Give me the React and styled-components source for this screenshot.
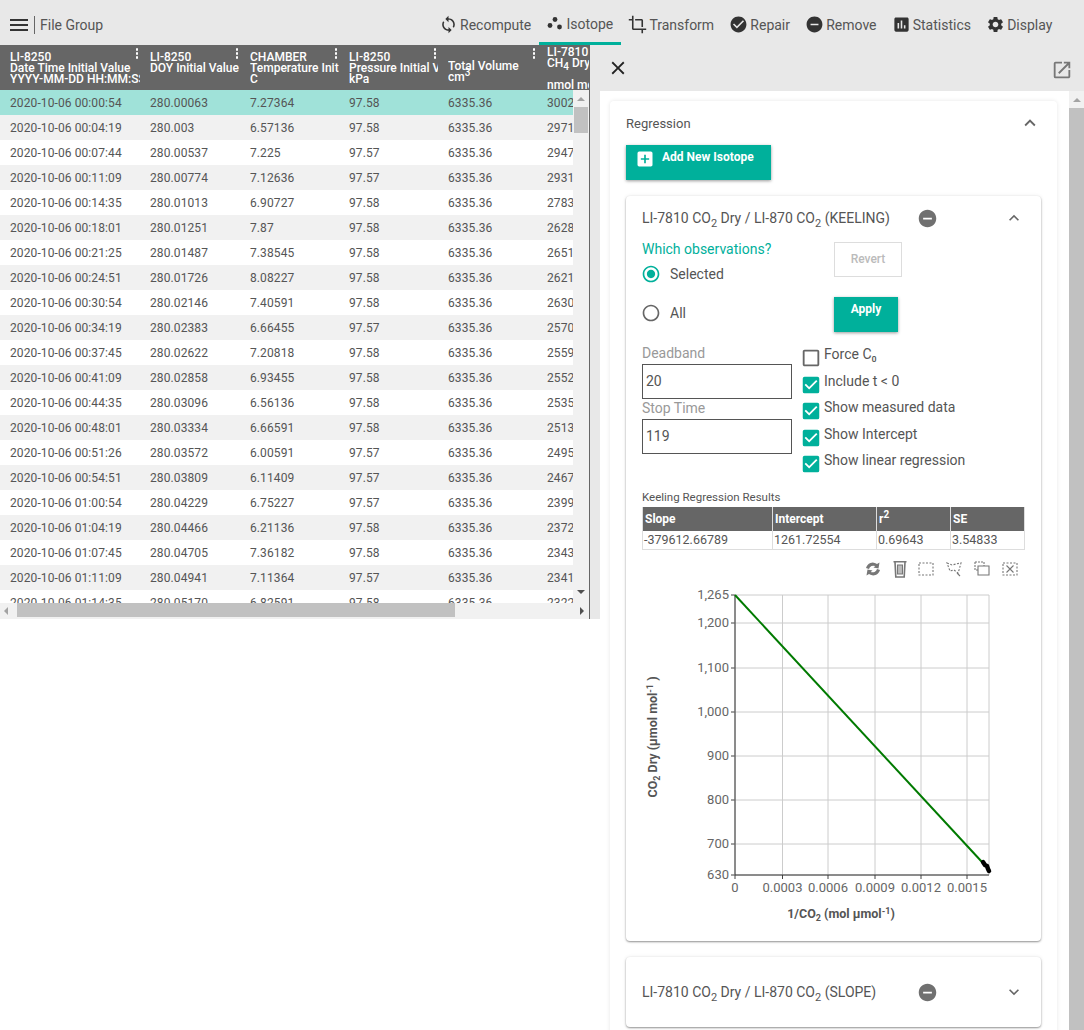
import styled, { createGlobalStyle } from "styled-components";
import {
  MdMenu,
  MdSync,
  MdCrop,
  MdCheckCircle,
  MdRemoveCircle,
  MdAssessment,
  MdSettings,
  MdClose,
  MdOpenInNew,
  MdExpandLess,
  MdExpandMore,
  MdAddBox,
  MdCheckBox,
  MdCheckBoxOutlineBlank,
  MdRadioButtonChecked,
  MdRadioButtonUnchecked,
} from "react-icons/md";

const TEAL = "#00b09b";

const columns = [
  { width: 140 },
  { width: 100 },
  { width: 99 },
  { width: 99 },
  { width: 99 },
  { width: 60 },
];

const rows = [
  ["2020-10-06 00:00:54", "280.00063", "7.27364", "97.58", "6335.36", "3002.1"],
  ["2020-10-06 00:04:19", "280.003", "6.57136", "97.58", "6335.36", "2971.4"],
  ["2020-10-06 00:07:44", "280.00537", "7.225", "97.57", "6335.36", "2947.2"],
  ["2020-10-06 00:11:09", "280.00774", "7.12636", "97.57", "6335.36", "2931.8"],
  ["2020-10-06 00:14:35", "280.01013", "6.90727", "97.58", "6335.36", "2783.5"],
  ["2020-10-06 00:18:01", "280.01251", "7.87", "97.58", "6335.36", "2628.3"],
  ["2020-10-06 00:21:25", "280.01487", "7.38545", "97.58", "6335.36", "2651.7"],
  ["2020-10-06 00:24:51", "280.01726", "8.08227", "97.58", "6335.36", "2621.9"],
  ["2020-10-06 00:30:54", "280.02146", "7.40591", "97.58", "6335.36", "2630.2"],
  ["2020-10-06 00:34:19", "280.02383", "6.66455", "97.57", "6335.36", "2570.6"],
  ["2020-10-06 00:37:45", "280.02622", "7.20818", "97.58", "6335.36", "2559.1"],
  ["2020-10-06 00:41:09", "280.02858", "6.93455", "97.58", "6335.36", "2552.4"],
  ["2020-10-06 00:44:35", "280.03096", "6.56136", "97.58", "6335.36", "2535.8"],
  ["2020-10-06 00:48:01", "280.03334", "6.66591", "97.58", "6335.36", "2513.3"],
  ["2020-10-06 00:51:26", "280.03572", "6.00591", "97.57", "6335.36", "2495.7"],
  ["2020-10-06 00:54:51", "280.03809", "6.11409", "97.57", "6335.36", "2467.2"],
  ["2020-10-06 01:00:54", "280.04229", "6.75227", "97.57", "6335.36", "2399.5"],
  ["2020-10-06 01:04:19", "280.04466", "6.21136", "97.58", "6335.36", "2372.1"],
  ["2020-10-06 01:07:45", "280.04705", "7.36182", "97.58", "6335.36", "2343.6"],
  ["2020-10-06 01:11:09", "280.04941", "7.11364", "97.57", "6335.36", "2341.9"],
  ["2020-10-06 01:14:35", "280.05170", "6.82591", "97.58", "6335.36", "2322.4"],
];

const checks = [
  { label: "Force C₀", on: false },
  { label: "Include t < 0", on: true },
  { label: "Show measured data", on: true },
  { label: "Show Intercept", on: true },
  { label: "Show linear regression", on: true },
];

const yTicks = [
  ["1,265", 15],
  ["1,200", 43],
  ["1,100", 88],
  ["1,000", 132],
  ["900", 176],
  ["800", 220],
  ["700", 264],
  ["630", 295],
];

const xTicks = [
  ["0", 93],
  ["0.0003", 140.5],
  ["0.0006", 186],
  ["0.0009", 233],
  ["0.0012", 279],
  ["0.0015", 325],
];

const GlobalStyle = createGlobalStyle`
  html, body {
    margin: 0;
    background: #fff;
  }
  #root {
    width: 1084px;
    height: 1030px;
    overflow: hidden;
    font-family: Roboto, "Liberation Sans", sans-serif;
    color: #555;
  }
  sub, sup {
    font-size: 75%;
    line-height: 0;
  }
`;

const Toolbar = styled.div`
  height: 45px;
  background: #e8e8e8;
  border-bottom: 1px solid #ccc;
  display: flex;
  align-items: stretch;
  padding: 0 24px 0 7px;
  margin-bottom: -1px;
  font-size: 14px;
`;
const GroupButton = styled.div`
  display: flex;
  align-items: center;
  flex: 1;
  padding-top: 5px;
  color: #555;
`;
const GroupName = styled.span`
  border-left: 1px solid #666;
  margin-left: 3px;
  padding-left: 5px;
  height: 18px;
  line-height: 18px;
`;
const ToolItem = styled.div`
  display: flex;
  align-items: center;
  gap: 2px;
  padding: ${(p) => (p.$active ? "5px" : "7px")} 7.6px 0;
  box-sizing: border-box;
  height: 45px;
  color: #555;
  border-bottom: 3px solid ${(p) => (p.$active ? TEAL : "transparent")};
  svg {
    color: #333;
    flex: none;
  }
`;

const Workspace = styled.div`
  display: flex;
  align-items: flex-start;
`;

const TablePane = styled.div`
  width: 590px;
  height: 574px;
  flex: none;
  box-sizing: border-box;
  border-right: 1px solid #666;
  display: flex;
  flex-direction: column;
  overflow: hidden;
`;
const HeaderRow = styled.div`
  display: flex;
  height: 45px;
  flex: none;
  background: #666;
  overflow: hidden;
`;
const HeaderCell = styled.div`
  position: relative;
  flex: none;
  width: ${(p) => p.$width}px;
  box-sizing: border-box;
  padding: 0 0 0 10px;
  display: flex;
  flex-direction: column;
  justify-content: center;
`;
const HeaderText = styled.div`
  color: #fff;
  font-size: 12px;
  font-weight: 500;
  line-height: 11px;
  white-space: nowrap;
  overflow: hidden;
  width: 100%;
  padding-top: ${(p) => p.$top || 2}px;
  sub {
    font-size: 10px;
  }
  sup {
    font-size: 10px;
  }
`;
const Kebab = styled.span`
  position: absolute;
  top: 3px;
  right: 2px;
  display: flex;
  flex-direction: column;
  gap: 1.5px;
  i {
    display: block;
    width: 2.5px;
    height: 2.5px;
    border-radius: 50%;
    background: #fff;
  }
`;
const TableBody = styled.div`
  display: flex;
  height: 513px;
  flex: none;
`;
const RowsClip = styled.div`
  width: 573px;
  flex: none;
  overflow: hidden;
`;
const Row = styled.div`
  display: flex;
  height: 25px;
  align-items: center;
  background: ${(p) => p.$bg};
`;
const Cell = styled.div`
  flex: none;
  width: ${(p) => p.$width}px;
  box-sizing: border-box;
  padding-left: 10px;
  font-size: 12px;
  letter-spacing: 0.1px;
  color: #555;
  white-space: nowrap;
`;

const VBar = styled.div`
  flex: 1;
  background: #f1f1f1;
  display: flex;
  flex-direction: column;
  align-items: center;
`;
const VThumb = styled.div`
  width: 100%;
  height: 26px;
  background: #c1c1c1;
  margin-top: ${(p) => p.$top}px;
  box-sizing: border-box;
  border: solid #f1f1f1;
  border-width: 0 1px;
`;
const Spacer = styled.div`
  flex: 1;
`;
const Arrow = styled.span`
  display: block;
  width: 0;
  height: 0;
  flex: none;
  border: 4px solid transparent;
  ${(p) =>
    p.$dir === "up" &&
    `border-top: 0; border-bottom: 4px solid ${p.$color}; margin-top: 7px;`}
  ${(p) =>
    p.$dir === "down" &&
    `border-bottom: 0; border-top: 4px solid ${p.$color}; margin-bottom: 9px;`}
  ${(p) =>
    p.$dir === "left" &&
    `border-left: 0; border-right: 4px solid ${p.$color}; margin-left: 4px;`}
  ${(p) =>
    p.$dir === "right" &&
    `border-right: 0; border-left: 4px solid ${p.$color}; margin-right: 5px;`}
`;
const HBar = styled.div`
  height: 16px;
  flex: none;
  background: #f1f1f1;
  display: flex;
  align-items: center;
`;
const HThumb = styled.div`
  width: 438px;
  height: 14px;
  margin-left: 9px;
  background: #c1c1c1;
  align-self: flex-start;
`;

const Drawer = styled.div`
  flex: 1;
  min-width: 0;
`;
const DrawerBar = styled.div`
  height: 46px;
  background: #e8e8e8;
  display: flex;
  align-items: center;
  justify-content: space-between;
  padding: 0 11px 0 17px;
  color: #222;
  svg:last-child {
    color: #777;
    margin-top: 4px;
  }
`;
const DrawerBody = styled.div`
  display: flex;
  height: 939px;
`;
const Gutter = styled.div`
  width: 10px;
  height: 528px;
  flex: none;
  background: #e8e8e8;
`;
const Panel = styled.div`
  flex: 1;
  min-width: 0;
  padding: 10px 12px 0 10px;
  overflow: hidden;
`;
const PanelBar = styled.div`
  width: 15px;
  flex: none;
  background: #f1f1f1;
  display: flex;
  flex-direction: column;
  align-items: center;
`;
const PanelThumb = styled.div`
  width: 100%;
  flex: 1;
  margin-top: 6px;
  background: #c1c1c1;
`;

const Card = styled.div`
  background: #fff;
  border-radius: 4px;
  box-shadow: 0 0 4px rgba(0, 0, 0, 0.1);
  padding: 0 16px 16px;
  min-height: 1000px;
`;
const CardHead = styled.div`
  display: flex;
  align-items: center;
  justify-content: space-between;
  height: 44px;
  font-size: 13px;
  color: #555;
  svg {
    color: #666;
  }
`;
const AddButton = styled.div`
  width: 145px;
  height: 35px;
  background: ${TEAL};
  color: #fff;
  box-shadow: 0 1px 3px rgba(0, 0, 0, 0.4);
  display: flex;
  align-items: flex-start;
  gap: 7px;
  padding: 4px 0 0 9px;
  box-sizing: border-box;
  font-size: 12px;
  font-weight: 700;
  line-height: 16px;
  svg {
    flex: none;
  }
`;
const IsotopeCard = styled.div`
  margin-top: 16px;
  background: #fff;
  border-radius: 4px;
  box-shadow: 0 1px 2px rgba(0, 0, 0, 0.4), 0 0 4px rgba(0, 0, 0, 0.08);
  padding: 0 16px ${(p) => p.$bottom || 0}px;
`;
const IsotopeHead = styled.div`
  display: flex;
  align-items: center;
  height: ${(p) => p.$height}px;
  font-size: 14px;
  color: #555;
  box-sizing: border-box;
  sub {
    font-size: 11px;
  }
`;
const IsotopeTitle = styled.span`
  width: 275px;
  white-space: nowrap;
  flex: none;
`;
const RemoveIcon = styled.span`
  display: flex;
  color: #707070;
  flex: 1;
`;
const Chevron = styled.span`
  display: flex;
  color: #666;
  margin-right: 1px;
`;

const OptionsRow = styled.div`
  display: flex;
  height: 93px;
`;
const ObservationCol = styled.div`
  width: 192px;
  flex: none;
`;
const ObservationTitle = styled.div`
  color: ${TEAL};
  font-size: 14px;
  line-height: 18px;
`;
const RadioRow = styled.div`
  display: flex;
  align-items: center;
  gap: 9px;
  height: 22px;
  margin-top: ${(p) => p.$top}px;
  margin-left: -1px;
  font-size: 14px;
  color: #555;
  svg {
    color: ${(p) => (p.$on ? TEAL : "#666")};
    flex: none;
  }
`;
const ActionCol = styled.div`
  display: flex;
  flex-direction: column;
  align-items: flex-start;
  gap: 20px;
  padding-top: 2px;
`;
const RevertButton = styled.div`
  width: 68px;
  height: 35px;
  box-sizing: border-box;
  border: 1px solid #ddd;
  color: #bbb;
  font-size: 12px;
  font-weight: 500;
  text-align: center;
  padding-top: 9px;
`;
const ApplyButton = styled.div`
  width: 64px;
  height: 35px;
  box-sizing: border-box;
  background: ${TEAL};
  color: #fff;
  font-size: 12px;
  font-weight: 700;
  text-align: center;
  padding-top: 5px;
  box-shadow: 0 1px 3px rgba(0, 0, 0, 0.4);
`;

const SettingsRow = styled.div`
  display: flex;
  margin-top: 11px;
  gap: 10px;
`;
const FieldCol = styled.div`
  width: 150px;
  flex: none;
`;
const FieldLabel = styled.div`
  color: #999;
  font-size: 14px;
  line-height: 16px;
  height: 19px;
  margin-top: 1px;
`;
const FieldBox = styled.div`
  height: 35px;
  box-sizing: border-box;
  border: 1px solid #555;
  padding: 0 3px;
  font-size: 14px;
  line-height: 33px;
  color: #555;
`;
const CheckCol = styled.div`
  display: flex;
  flex-direction: column;
  gap: 6.5px;
  padding-top: 3px;
`;
const CheckRow = styled.div`
  display: flex;
  align-items: flex-start;
  gap: 2px;
  height: 20px;
  font-size: 14px;
  line-height: 14px;
  color: #555;
  margin-left: -2px;
  svg {
    color: ${(p) => (p.$on ? TEAL : "#666")};
    flex: none;
  }
`;

const ResultsTitle = styled.div`
  margin-top: 17px;
  font-size: 11.5px;
  line-height: 14px;
  color: #555;
`;
const ResultsTable = styled.div`
  display: grid;
  grid-template-columns: 130px 104px 74px 74px;
  width: 383px;
  margin-top: 3px;
  border-bottom: 1px solid #ddd;
  border-left: 1px solid #ddd;
  box-sizing: border-box;
`;
const ResultsHead = styled.div`
  background: #666;
  color: #fff;
  font-size: 12px;
  font-weight: 700;
  height: 24px;
  line-height: 24px;
  padding-left: 2px;
  border-right: 1px solid #ddd;
  sup {
    font-size: 10px;
  }
`;
const ResultsCell = styled.div`
  font-size: 12.5px;
  height: 18px;
  line-height: 18px;
  padding-left: 1px;
  color: #555;
  border-right: 1px solid #ddd;
`;

const ChartTools = styled.div`
  display: flex;
  justify-content: flex-end;
  gap: 10px;
  height: 18px;
  margin-top: 10px;
  padding-right: 6px;
  color: #777;
  svg {
    overflow: visible;
  }
`;
const ChartSvg = styled.svg`
  display: block;
  margin-top: 2px;
  font-family: Roboto, "Liberation Sans", sans-serif;
`;

function IsotopeIcon() {
  return (
    <svg width="18" height="16" viewBox="0 0 18 16" fill="#333">
      <circle cx="9" cy="3.5" r="2.4" />
      <circle cx="4" cy="9.5" r="2.4" />
      <circle cx="13.500" cy="11" r="2.4" />
    </svg>
  );
}

function ToolIcon({ children }) {
  return (
    <svg
      width="18"
      height="18"
      viewBox="0 0 18 18"
      fill="none"
      stroke="#777"
      strokeWidth="1.1"
    >
      {children}
    </svg>
  );
}

function PlotTools() {
  return (
    <ChartTools>
      <ToolIcon>
        <g transform="translate(3 0)">
          <path
            d="M2 8a7 7 0 0 1 11-4l2.500-1.500-1 6-5-1 1.800-1.400A4.500 4.500 0 0 0 5 9zM16 10a7 7 0 0 1-11 4l-2.500 1.500 1-6 5 1-1.800 1.400A4.500 4.500 0 0 0 13 9z"
            fill="#777"
            stroke="none"
          />
        </g>
      </ToolIcon>
      <ToolIcon>
        <g transform="translate(2 0)">
          <path d="M2.500 1.800h13M4 2l.8 15h8.400L14 2" strokeWidth="1.6" />
          <path d="M6.500 5v9h5V5z" fill="#bbb" />
        </g>
      </ToolIcon>
      <ToolIcon>
        <path d="M2 3h14v12H2z" strokeDasharray="2 1.500" />
      </ToolIcon>
      <ToolIcon>
        <path d="M2 3l5 2 4-1 5-1-2 7-1 3-4-3-4 1z" strokeDasharray="2 1.500" />
        <path d="M12 13l3 3" />
      </ToolIcon>
      <ToolIcon>
        <path d="M2 2h9v4" strokeDasharray="2 1" />
        <path d="M2 2v8h3" strokeDasharray="2 1" />
        <path d="M5 6h11v9H5z" />
      </ToolIcon>
      <ToolIcon>
        <path d="M2 3h14v12H2z" strokeDasharray="2 1.500" />
        <path d="M5.500 5.500l7 7M12.500 5.500l-7 7" />
      </ToolIcon>
    </ChartTools>
  );
}

function HeaderMenu() {
  return (
    <Kebab>
      <i />
      <i />
      <i />
    </Kebab>
  );
}

function KeelingChart() {
  const plot = { left: 93, right: 347, top: 15, bottom: 295 };
  return (
    <ChartSvg width="383" height="350" viewBox="0 0 383 350">
      {yTicks.map(([label, y]) => (
        <g key={label}>
          <line x1={plot.left} x2={plot.right} y1={y} y2={y} stroke="#ccc" />
          <line x1={plot.left - 4} x2={plot.left} y1={y} y2={y} stroke="#444" />
          <text x={plot.left - 6} y={y + 4} fontSize="13" fill="#666" textAnchor="end">
            {label}
          </text>
        </g>
      ))}
      {xTicks.map(([label, x]) => (
        <g key={label}>
          <line x1={x} x2={x} y1={plot.top} y2={plot.bottom} stroke="#ccc" />
          <line x1={x} x2={x} y1={plot.bottom} y2={plot.bottom + 4} stroke="#444" />
          <text x={x} y={plot.bottom + 17} fontSize="13" fill="#666" textAnchor="middle">
            {label}
          </text>
        </g>
      ))}
      <line x1={plot.right} x2={plot.right} y1={plot.top} y2={plot.bottom} stroke="#ccc" />
      <line x1={plot.left} x2={plot.left} y1={plot.top} y2={plot.bottom} stroke="#333" />
      <line x1={plot.left} x2={plot.right} y1={plot.bottom} y2={plot.bottom} stroke="#333" />
      <line x1={plot.left} y1={plot.top} x2={340} y2={282} stroke="#007a00" strokeWidth="2" />
      <path
        d="M341 282l2 3 2 1 1 3 1 2"
        fill="none"
        stroke="#000"
        strokeWidth="4.5"
        strokeLinecap="round"
      />
      <text
        x="199"
        y="338"
        fontSize="12.5"
        fontWeight="700"
        fill="#555"
        textAnchor="middle"
      >
        1/CO<tspan fontSize="9" dy="3">2</tspan>
        <tspan dy="-3"> (mol µmol</tspan>
        <tspan fontSize="9" dy="-4">-1</tspan>
        <tspan dy="4">)</tspan>
      </text>
      <text
        transform="translate(15 157) rotate(-90)"
        fontSize="12.5"
        fontWeight="700"
        fill="#555"
        textAnchor="middle"
      >
        CO<tspan fontSize="9" dy="3">2</tspan>
        <tspan dy="-3"> Dry (µmol mol</tspan>
        <tspan fontSize="9" dy="-4">-1</tspan>
        <tspan dy="4"> )</tspan>
      </text>
    </ChartSvg>
  );
}

export default function App() {
  return (
    <>
      <GlobalStyle />
      <Toolbar>
        <GroupButton>
          <MdMenu size={24} color="#333" />
          <GroupName>File Group</GroupName>
        </GroupButton>
        <ToolItem>
          <MdSync size={19} />
          Recompute
        </ToolItem>
        <ToolItem $active>
          <IsotopeIcon />
          Isotope
        </ToolItem>
        <ToolItem>
          <MdCrop size={19} />
          Transform
        </ToolItem>
        <ToolItem>
          <MdCheckCircle size={19} />
          Repair
        </ToolItem>
        <ToolItem>
          <MdRemoveCircle size={19} />
          Remove
        </ToolItem>
        <ToolItem>
          <MdAssessment size={19} />
          Statistics
        </ToolItem>
        <ToolItem>
          <MdSettings size={19} />
          Display
        </ToolItem>
      </Toolbar>
      <Workspace>
        <TablePane>
          <HeaderRow>
            <HeaderCell $width={columns[0].width}>
              <HeaderText>
                LI-8250
                <br />
                Date Time Initial Value
                <br />
                YYYY-MM-DD HH:MM:SS
              </HeaderText>
              <HeaderMenu />
            </HeaderCell>
            <HeaderCell $width={columns[1].width}>
              <HeaderText>
                LI-8250
                <br />
                DOY Initial Value
                <br />
                &nbsp;
              </HeaderText>
              <HeaderMenu />
            </HeaderCell>
            <HeaderCell $width={columns[2].width}>
              <HeaderText>
                CHAMBER
                <br />
                Temperature Initial Value
                <br />C
              </HeaderText>
              <HeaderMenu />
            </HeaderCell>
            <HeaderCell $width={columns[3].width}>
              <HeaderText>
                LI-8250
                <br />
                Pressure Initial Value
                <br />
                kPa
              </HeaderText>
              <HeaderMenu />
            </HeaderCell>
            <HeaderCell $width={columns[4].width}>
              <HeaderText $top={9}>
                Total Volume
                <br />
                cm<sup>3</sup>
              </HeaderText>
              <HeaderMenu />
            </HeaderCell>
            <HeaderCell $width={columns[5].width}>
              <HeaderText>
                LI-7810
                <br />
                CH<sub>4</sub> Dry
                <br />
                <br />
                nmol mol
              </HeaderText>
            </HeaderCell>
          </HeaderRow>
          <TableBody>
            <RowsClip>
              {rows.map((row, i) => (
                <Row
                  key={row[0]}
                  $bg={i === 0 ? "#a0e2d9" : i % 2 ? "#f1f1f1" : "#fff"}
                >
                  {row.map((value, c) => (
                    <Cell key={c} $width={columns[c].width}>
                      {value}
                    </Cell>
                  ))}
                </Row>
              ))}
            </RowsClip>
            <VBar>
              <Arrow $dir="up" $color="#a3a3a3" />
              <VThumb $top={6} />
              <Spacer />
              <Arrow $dir="down" $color="#505050" />
            </VBar>
          </TableBody>
          <HBar>
            <Arrow $dir="left" $color="#a3a3a3" />
            <HThumb />
            <Spacer />
            <Arrow $dir="right" $color="#505050" />
          </HBar>
        </TablePane>
        <Drawer>
          <DrawerBar>
            <MdClose size={22} />
            <MdOpenInNew size={22} />
          </DrawerBar>
          <DrawerBody>
            <Gutter />
            <Panel>
              <Card>
                <CardHead>
                  Regression
                  <MdExpandLess size={22} />
                </CardHead>
                <AddButton>
                  <MdAddBox size={20} />
                  Add New Isotope
                </AddButton>
                <IsotopeCard $bottom={11}>
                  <IsotopeHead $height={44}>
                    <IsotopeTitle>
                      LI-7810 CO<sub>2</sub> Dry / LI-870 CO<sub>2</sub> (KEELING)
                    </IsotopeTitle>
                    <RemoveIcon>
                      <MdRemoveCircle size={21} />
                    </RemoveIcon>
                    <Chevron>
                      <MdExpandLess size={20} />
                    </Chevron>
                  </IsotopeHead>
                  <OptionsRow>
                    <ObservationCol>
                      <ObservationTitle>Which observations?</ObservationTitle>
                      <RadioRow $on $top={5}>
                        <MdRadioButtonChecked size={20} />
                        Selected
                      </RadioRow>
                      <RadioRow $top={17}>
                        <MdRadioButtonUnchecked size={20} />
                        All
                      </RadioRow>
                    </ObservationCol>
                    <ActionCol>
                      <RevertButton>Revert</RevertButton>
                      <ApplyButton>Apply</ApplyButton>
                    </ActionCol>
                  </OptionsRow>
                  <SettingsRow>
                    <FieldCol>
                      <FieldLabel>Deadband</FieldLabel>
                      <FieldBox>20</FieldBox>
                      <FieldLabel>Stop Time</FieldLabel>
                      <FieldBox>119</FieldBox>
                    </FieldCol>
                    <CheckCol>
                      {checks.map((c) => (
                        <CheckRow key={c.label} $on={c.on}>
                          {c.on ? (
                            <MdCheckBox size={22} />
                          ) : (
                            <MdCheckBoxOutlineBlank size={22} />
                          )}
                          {c.label}
                        </CheckRow>
                      ))}
                    </CheckCol>
                  </SettingsRow>
                  <ResultsTitle>Keeling Regression Results</ResultsTitle>
                  <ResultsTable>
                    <ResultsHead>Slope</ResultsHead>
                    <ResultsHead>Intercept</ResultsHead>
                    <ResultsHead>
                      r<sup>2</sup>
                    </ResultsHead>
                    <ResultsHead>SE</ResultsHead>
                    <ResultsCell>-379612.66789</ResultsCell>
                    <ResultsCell>1261.72554</ResultsCell>
                    <ResultsCell>0.69643</ResultsCell>
                    <ResultsCell>3.54833</ResultsCell>
                  </ResultsTable>
                  <PlotTools />
                  <KeelingChart />
                </IsotopeCard>
                <IsotopeCard>
                  <IsotopeHead $height={70}>
                    <IsotopeTitle>
                      LI-7810 CO<sub>2</sub> Dry / LI-870 CO<sub>2</sub> (SLOPE)
                    </IsotopeTitle>
                    <RemoveIcon>
                      <MdRemoveCircle size={21} />
                    </RemoveIcon>
                    <Chevron>
                      <MdExpandMore size={20} />
                    </Chevron>
                  </IsotopeHead>
                </IsotopeCard>
              </Card>
            </Panel>
            <PanelBar>
              <Arrow $dir="up" $color="#a3a3a3" />
              <PanelThumb />
            </PanelBar>
          </DrawerBody>
        </Drawer>
      </Workspace>
    </>
  );
}
